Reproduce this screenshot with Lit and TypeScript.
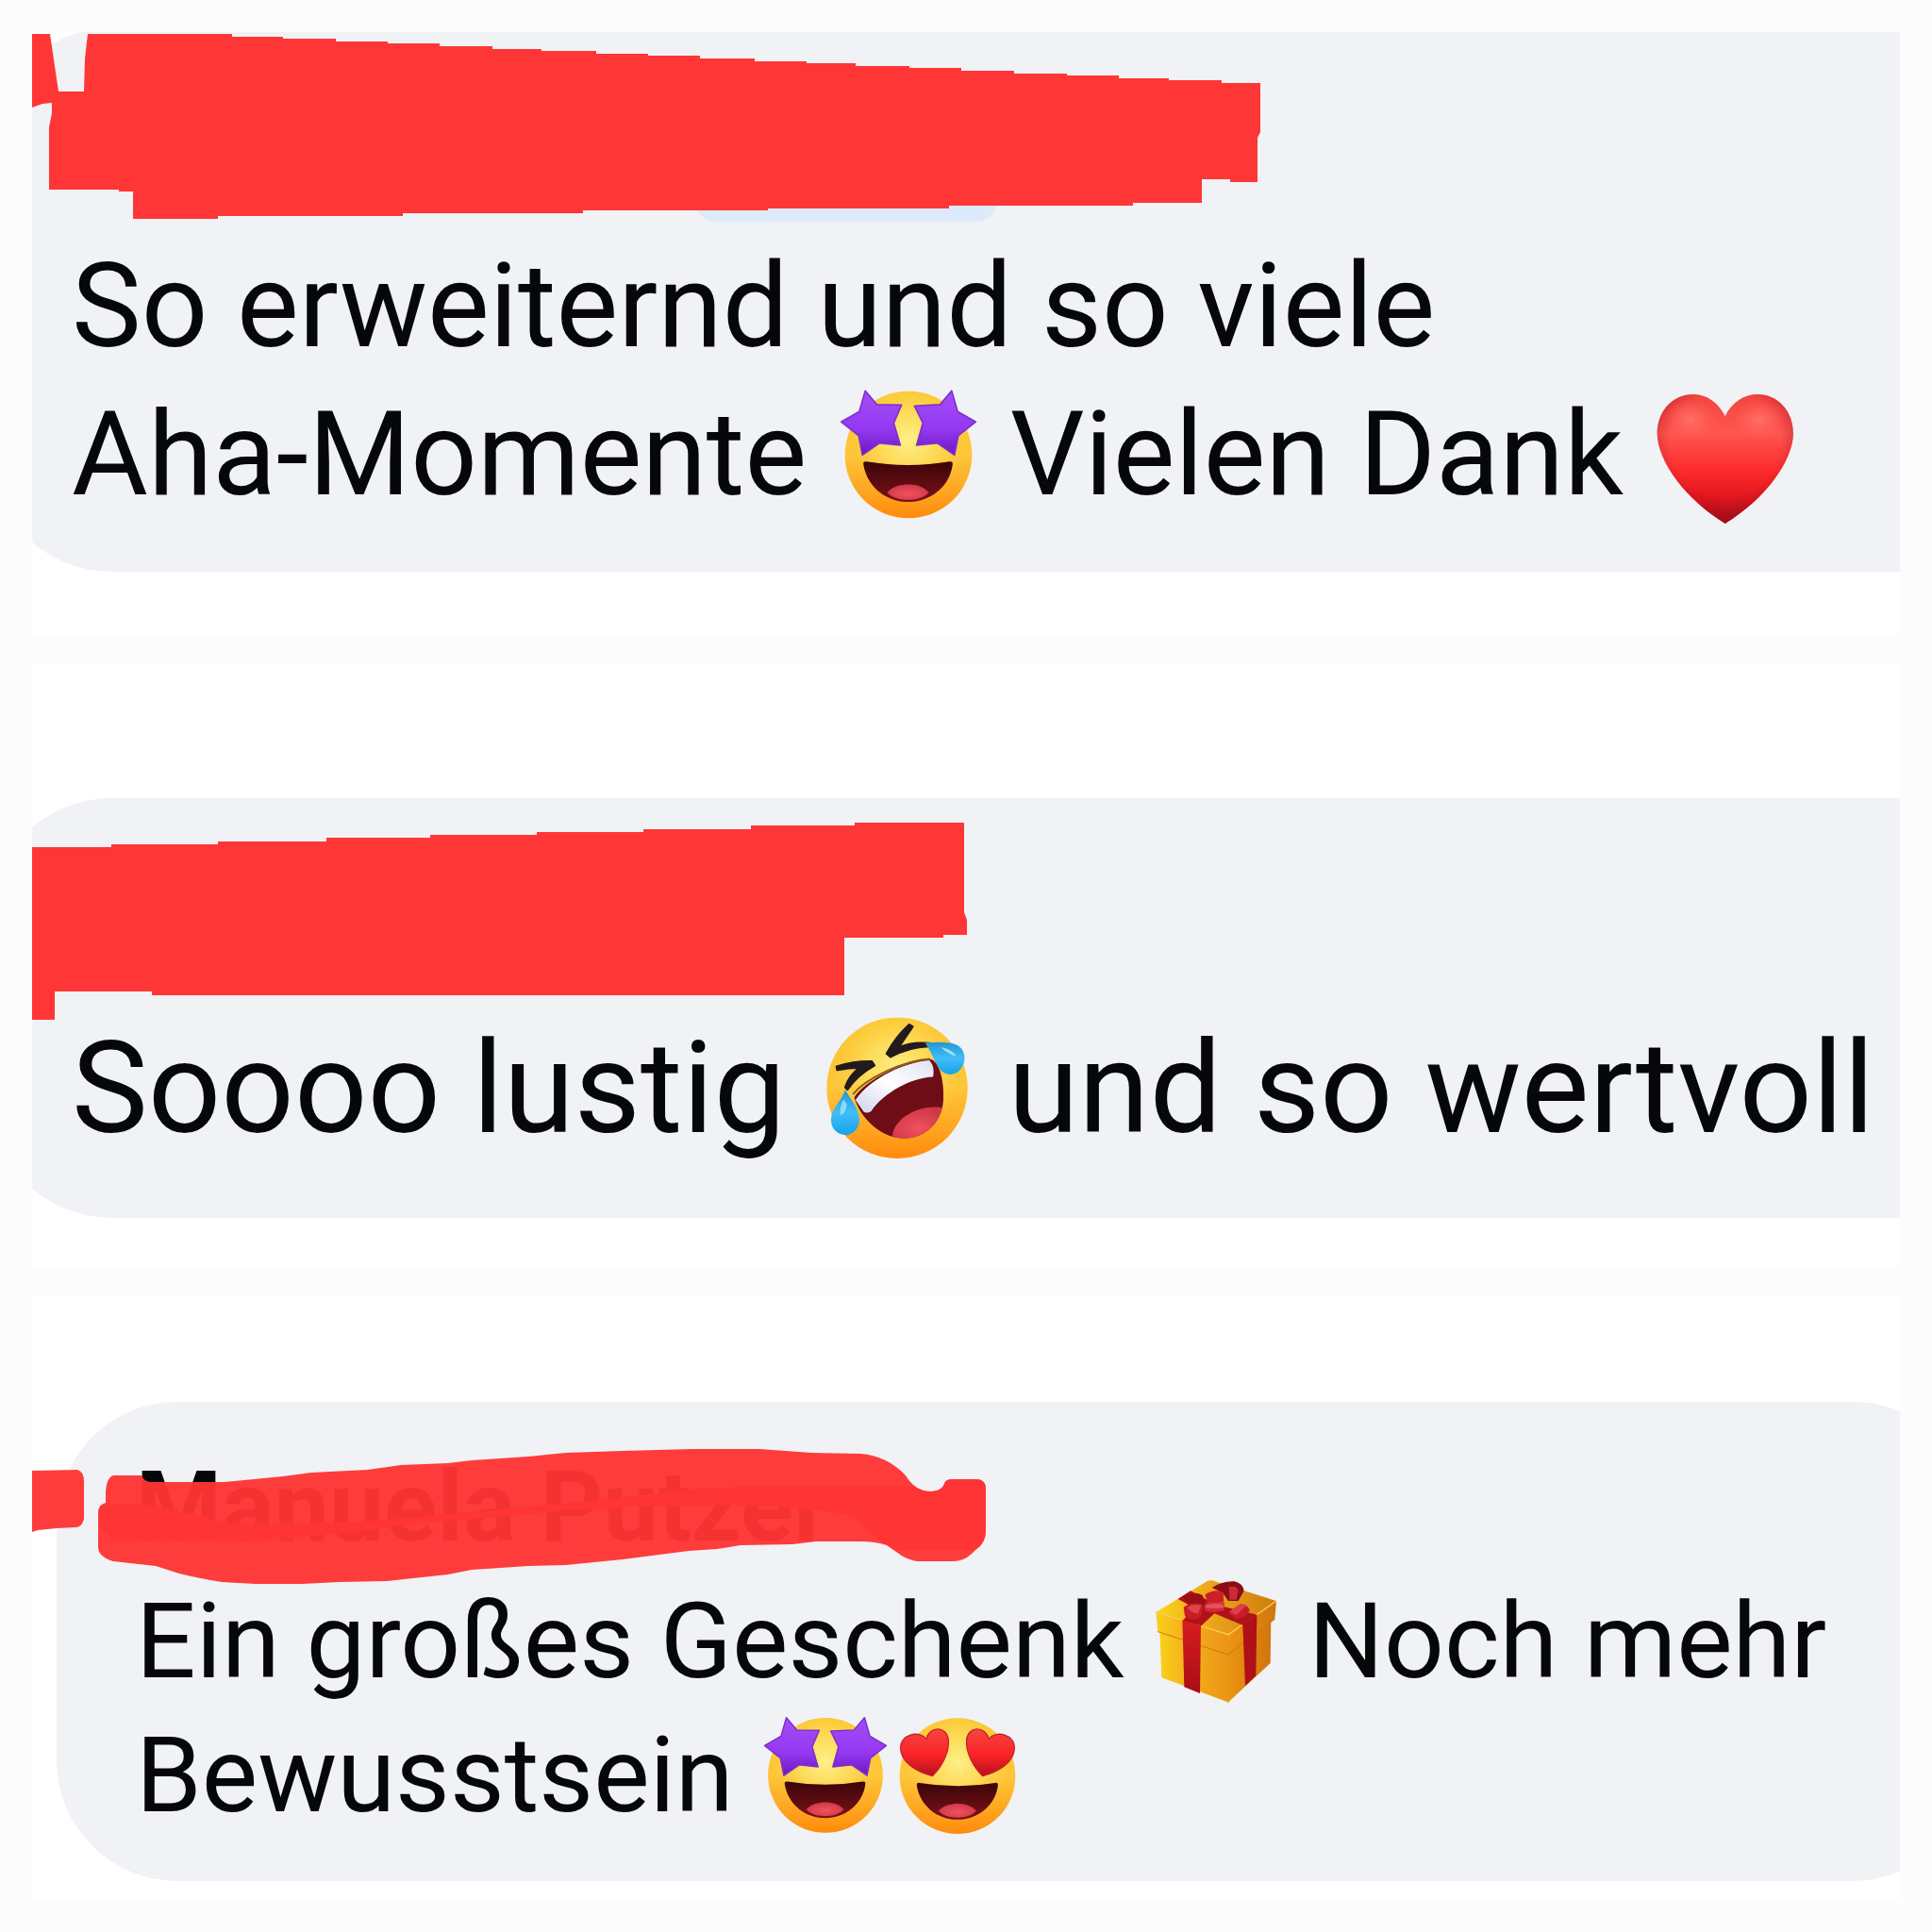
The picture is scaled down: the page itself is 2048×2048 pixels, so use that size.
import { LitElement, html, css, svg, nothing } from "lit";
import { customElement, property } from "lit/decorators.js";

type Glyph = "star-eyes" | "heart" | "rofl" | "gift" | "heart-eyes";

const faceDefs = svg`
  <linearGradient id="face" x1="0" y1="0" x2="0" y2="1">
    <stop offset="0" stop-color="#fbc62f" />
    <stop offset="0.5" stop-color="#fdc63a" />
    <stop offset="0.8" stop-color="#ffa41f" />
    <stop offset="1" stop-color="#ff8a0c" />
  </linearGradient>
  <radialGradient id="glow" cx="0.5" cy="0.38" r="0.45">
    <stop offset="0" stop-color="#fdf08a" />
    <stop offset="0.5" stop-color="#fde264" stop-opacity="0.75" />
    <stop offset="1" stop-color="#fdd44c" stop-opacity="0" />
  </radialGradient>
  <linearGradient id="mouth" x1="0" y1="0" x2="0" y2="1">
    <stop offset="0" stop-color="#3a0508" />
    <stop offset="1" stop-color="#7c1219" />
  </linearGradient>
  <radialGradient id="tongue" cx="0.5" cy="0.6" r="0.6">
    <stop offset="0" stop-color="#f0525e" />
    <stop offset="1" stop-color="#cf3648" />
  </radialGradient>
  <linearGradient id="violet" x1="0" y1="0" x2="0" y2="1">
    <stop offset="0" stop-color="#a44ef6" />
    <stop offset="0.6" stop-color="#9438f2" />
    <stop offset="1" stop-color="#6a18be" />
  </linearGradient>
  <linearGradient id="love" x1="0" y1="0" x2="0" y2="1">
    <stop offset="0" stop-color="#f5453f" />
    <stop offset="0.55" stop-color="#fb2429" />
    <stop offset="1" stop-color="#b3101c" />
  </linearGradient>
`;

const grin = svg`
  <path d="M121 274Q119 263 131 265Q265 287 396 265Q408 263 406 275C397 345 335 394 264 394S132 345 121 274Z" fill="url(#mouth)" />
  <path d="M197 364C214 345 238 338 264 338S314 345 330 364C312 382 288 387 264 387S215 382 197 364Z" fill="url(#tongue)" />
`;

const art: Record<Glyph, { box: string; label: string; body: unknown }> = {
  "star-eyes": {
    box: "45 20 440 440",
    label: "Gesicht mit Sternaugen",
    body: svg`
      <circle cx="265" cy="243" r="203" fill="url(#face)" />
      <circle cx="265" cy="243" r="203" fill="url(#glow)" />
      ${grin}
      <g fill="url(#violet)" stroke="#7f2fd0" stroke-width="5" stroke-linejoin="round">
        <path d="M127 39L164 83L243 84L218 142L239 213L172 206L118 244L106 182L50 138L108 105Z" />
        <path d="M403 39L366 83L284 87L311 142L291 213L358 206L412 244L424 182L480 138L422 105Z" />
      </g>`,
  },
  heart: {
    box: "45 20 440 440",
    label: "Rotes Herz",
    body: svg`
      <defs>
        <linearGradient id="heartbase" x1="0" y1="0" x2="0" y2="1">
          <stop offset="0" stop-color="#f4443f" />
          <stop offset="0.3" stop-color="#ff5650" />
          <stop offset="0.6" stop-color="#fb2a2c" />
          <stop offset="0.8" stop-color="#e2161e" />
          <stop offset="1" stop-color="#a80c18" />
        </linearGradient>
        <radialGradient id="heartedge" cx="0.5" cy="0.38" r="0.62">
          <stop offset="0.65" stop-color="#b31420" stop-opacity="0" />
          <stop offset="1" stop-color="#8e0d18" stop-opacity="0.6" />
        </radialGradient>
        <radialGradient id="heartshine" cx="0.5" cy="0.5" r="0.5">
          <stop offset="0" stop-color="#ff7469" stop-opacity="0.9" />
          <stop offset="1" stop-color="#ff6259" stop-opacity="0" />
        </radialGradient>
      </defs>
      <path d="M264 120C242 74 204 50 161 50C96 50 47 104 47 175C47 250 120 375 264 463C408 375 482 250 482 175C482 104 433 50 368 50C325 50 286 74 264 120Z" fill="url(#heartbase)" />
      <path d="M264 120C242 74 204 50 161 50C96 50 47 104 47 175C47 250 120 375 264 463C408 375 482 250 482 175C482 104 433 50 368 50C325 50 286 74 264 120Z" fill="url(#heartedge)" />
      <ellipse cx="155" cy="130" rx="85" ry="65" fill="url(#heartshine)" />
      <ellipse cx="372" cy="130" rx="85" ry="65" fill="url(#heartshine)" />`,
  },
  rofl: {
    box: "32 3 482 482",
    label: "Vor Lachen am Boden",
    body: svg`
      <defs>
        <linearGradient id="tear" x1="0" y1="0" x2="0" y2="1">
          <stop offset="0" stop-color="#2196d8" />
          <stop offset="0.5" stop-color="#42bdf6" />
          <stop offset="1" stop-color="#16a3ec" />
        </linearGradient>
        <linearGradient id="teeth" x1="0" y1="1" x2="1" y2="0">
          <stop offset="0" stop-color="#cfd3ea" />
          <stop offset="0.5" stop-color="#ffffff" />
          <stop offset="1" stop-color="#dfe2f2" />
        </linearGradient>
        <clipPath id="laugh">
          <path d="M136 278C170 222 300 160 380 156C402 162 421 205 421 276C421 352 368 409 295 409C225 409 158 350 136 278Z" />
        </clipPath>
      </defs>
      <circle cx="273" cy="248" r="225" fill="url(#face)" />
      <circle cx="273" cy="248" r="225" fill="url(#glow)" />
      <g clip-path="url(#laugh)">
        <rect x="120" y="140" width="320" height="280" fill="#6e0d16" />
        <path d="M258 396C268 340 350 296 425 312V420H260Z" fill="url(#tongue)" />
        <path d="M140 286C190 215 300 165 376 160Q394 180 388 212C320 214 230 262 190 322Q176 330 166 324Z" fill="url(#teeth)" />
      </g>
      <path d="M132 268C170 220 290 160 378 155" fill="none" stroke="#8c5a14" stroke-width="6" />
      <g fill="#221a1c" stroke="#221a1c" stroke-linejoin="round" stroke-width="8">
        <path d="M312 46L322 52L276 120Q320 100 376 106L374 114Q310 116 252 148L240 138Q270 84 312 46Z" />
        <path d="M80 180Q140 162 192 164L200 176Q146 206 114 252L108 246Q120 208 156 182Q120 182 82 190Z" />
      </g>
      <path d="M362 103C400 102 440 98 468 113C494 130 494 168 474 190C456 210 428 208 413 192C394 172 384 134 362 103Z" fill="url(#tear)" />
      <path d="M412 118Q446 122 462 146Q440 142 412 118Z" fill="#b9ecfd" opacity="0.8" />
      <path d="M107 254C126 288 152 312 152 350C152 380 130 399 106 398C80 397 61 377 62 346C64 312 96 290 107 254Z" fill="url(#tear)" />
      <path d="M102 284Q88 308 92 336Q112 326 112 300Z" fill="#9fe3fb" opacity="0.8" />`,
  },
  gift: {
    box: "43 36 396 396",
    label: "Geschenk",
    body: svg`
      <defs>
        <linearGradient id="left" x1="0" y1="0" x2="1" y2="0">
          <stop offset="0" stop-color="#f9d01a" />
          <stop offset="0.35" stop-color="#f6b41c" />
          <stop offset="1" stop-color="#ea9415" />
        </linearGradient>
        <linearGradient id="right" x1="0" y1="0" x2="1" y2="0">
          <stop offset="0" stop-color="#ec9412" />
          <stop offset="1" stop-color="#d0760e" />
        </linearGradient>
        <linearGradient id="lid" x1="0" y1="0" x2="1" y2="0">
          <stop offset="0" stop-color="#fbd51c" />
          <stop offset="0.45" stop-color="#eda51a" />
          <stop offset="1" stop-color="#d07c0e" />
        </linearGradient>
        <linearGradient id="ribbon" x1="0" y1="0" x2="0" y2="1">
          <stop offset="0" stop-color="#d81c22" />
          <stop offset="1" stop-color="#a80d14" />
        </linearGradient>
      </defs>
      <path d="M62 195L282 255V431L68 352Z" fill="url(#left)" />
      <path d="M278 255L416 165L414 306L278 432Z" fill="url(#right)" />
      <path d="M50 144L212 46Q225 40 238 46L432 108L281 216Z" fill="url(#lid)" />
      <path d="M50 144L281 214L279 279L56 206Z" fill="url(#left)" />
      <path d="M281 214L433 108L428 166L279 279Z" fill="url(#right)" />
      <path d="M56 206L279 279L428 166" fill="none" stroke="#c87a12" stroke-width="3" />
      <path d="M50 144L281 215L433 108" fill="none" stroke="#fccb4c" stroke-width="4" />
      <path d="M134 168L193 188L190 402L140 382Z" fill="url(#ribbon)" />
      <path d="M326 184L371 152L368 346L334 378Z" fill="#b01018" />
      <path d="M120 102L160 76L240 120L372 152L326 185L236 148L193 188L136 170L170 130Z" fill="#b01219" />
      <path d="M228 66Q262 44 300 46Q326 52 330 76L312 108L280 108L262 82Z" fill="#8e0c17" />
      <path d="M282 64Q308 58 312 76L306 104L284 104Z" fill="#c92a34" />
      <path d="M136 96Q170 74 198 90L210 122L150 116Z" fill="#9a0e17" />
      <path d="M206 88Q238 68 264 80L266 112L214 116Z" fill="#cc1f29" />
      <path d="M138 128Q164 110 196 118Q206 138 186 164Q160 172 142 156Z" fill="#c91c26" />
      <path d="M150 128Q170 116 194 122L184 148Q158 146 150 128Z" fill="#dd444e" />
      <path d="M280 146L318 118Q342 118 348 138Q340 160 306 166Z" fill="#c91c26" />
      <path d="M284 142L318 118L338 124L304 154Z" fill="#dc3f49" />
      <path d="M204 118Q236 106 268 114V138Q236 148 206 140Z" fill="#d42a34" />
      <path d="M208 122Q236 112 266 120V130Q236 134 208 130Z" fill="#e5525c" />`,
  },
  "heart-eyes": {
    box: "452 12 396 396",
    label: "Gesicht mit Herzaugen",
    body: svg`
      <circle cx="650" cy="215" r="184" fill="url(#face)" />
      <circle cx="650" cy="215" r="184" fill="url(#glow)" />
      <g transform="translate(411 -3) scale(0.905)">${grin}</g>
      <g fill="url(#love)" stroke="#cc1f26" stroke-width="4" stroke-linejoin="round">
        <path d="M570 215C522 203 469 172 469 126C469 82 526 68 551 97C560 56 616 54 621 100C625 142 596 190 570 215Z" />
        <path d="M730 215C778 203 831 172 831 126C831 82 774 68 749 97C740 56 684 54 679 100C675 142 704 190 730 215Z" />
      </g>`,
  },
};

@customElement("emoji-glyph")
export class EmojiGlyph extends LitElement {
  @property() name: Glyph = "heart";

  static styles = css`
    :host {
      display: inline-block;
      width: var(--glyph);
      height: var(--glyph);
      margin: 0 4px;
      vertical-align: var(--glyph-drop);
    }
    .glyph {
      display: block;
      width: 100%;
      height: 100%;
      overflow: visible;
    }
  `;

  render() {
    const g = art[this.name];
    return html`<svg class="glyph" viewBox=${g.box} role="img" aria-label=${g.label}>
      <defs>${faceDefs}</defs>
      ${g.body}
    </svg>`;
  }
}

/* Stair-stepped edge of a blocky marker stroke: x positions of the steps, start and end height. */
function stairs(xs: number[], from: number, to: number): string {
  let y = from;
  return xs
    .map((x, i) => {
      const before = y;
      y = Math.round(from + ((to - from) * (i + 1)) / xs.length);
      return `L${x} ${before}L${x} ${y}`;
    })
    .join("");
}

const edgeOne = stairs(
  [246, 300, 356, 411, 466, 522, 574, 632, 687, 742, 800, 855, 907, 964, 1019, 1075, 1131, 1186, 1239, 1295],
  36,
  88,
);
const edgeTwo = stairs([118, 231, 346, 456, 569, 682, 796, 906], 898, 872);

const markerOne = svg`
  <rect x="736" y="170" width="322" height="65" rx="24" fill="#dcebfb" />
  <path fill="#ff3636" d="M34 36H53L62 97H89L90 62L93 36${edgeOne}H1336V140L1333 146V193H1304V190H1274V215H1201V218H1006V221H814V223H618V226H427V229H231V232H141V203H126V201H52V135L55 120V109L45 110L34 114Z" />
`;

const markerTwo = svg`
  <path fill="#ff3636" d="M34 898${edgeTwo}H1022V967L1025 975V991H1000V994H895V1055H161V1051H58V1081H34Z" />
`;

const markerThree = svg`
  <g fill="#ff3434" fill-opacity="0.96">
    <path d="M34 1559L82 1558Q89 1560 89 1570V1610Q87 1619 80 1619L60 1620L40 1622L34 1624Z" />
    <path d="M120 1564H150Q153 1571 160 1571H238L300 1565L330 1561L390 1558L425 1553L475 1551L500 1548L560 1544L600 1540L660 1538L734 1536H805L860 1540L912 1541Q940 1543 960 1564Q970 1581 987 1581Q999 1580 1001 1573Q1002 1568 1010 1568H1036Q1045 1569 1045 1578V1622Q1045 1636 1034 1643Q1024 1655 1010 1655H972Q960 1653 950 1645L940 1638Q928 1634 912 1634H865L840 1637L785 1638L760 1642L730 1644L660 1653L600 1659L560 1660L500 1664L475 1669L410 1676L360 1677L320 1679H270L235 1677Q210 1673 190 1668L165 1660L120 1655Q104 1650 104 1640V1602Q105 1595 112 1593V1582Q113 1566 120 1564Z" />
    <path d="M106 1596L150 1594L190 1602L240 1614L300 1616L400 1612L500 1603L560 1597L640 1590L720 1580L800 1575H968Q976 1581 987 1581Q999 1580 1001 1573Q1002 1568 1010 1568H1036Q1045 1569 1045 1578V1622Q1045 1636 1034 1643H948Q920 1625 905 1608Q880 1600 800 1596Q700 1594 600 1601L540 1607L440 1615L370 1625L270 1633L120 1632L106 1620Z" />
  </g>
`;

@customElement("app-root")
export class AppRoot extends LitElement {
  static styles = css`
    :host {
      display: block;
      font-family: Roboto, "Liberation Sans", sans-serif;
      color: #050708;
    }
    .board {
      box-sizing: border-box;
      min-height: 100vh;
      padding: 34px;
      display: grid;
      grid-template-columns: minmax(0, 1fr);
      grid-auto-rows: 1fr;
      gap: 32px;
      background: #fcfcfc;
    }
    .panel {
      overflow: hidden;
      background: #fff;
    }
    .bubble {
      display: flex;
      flex-direction: column;
      background: #f0f2f5;
      border-radius: 128px 0 0 128px;
      white-space: nowrap;
      margin: 0 -78px 0 -44px;
      padding: 0 86px 46px;
    }
    .first {
      margin-top: -4px;
      font-size: 124px;
      line-height: 157px;
      --glyph: 146px;
      --glyph-drop: -30px;
    }
    .second {
      margin-top: 141px;
      padding-bottom: 52px;
      font-size: 136px;
      line-height: 170px;
      --glyph: 160px;
      --glyph-drop: -32px;
    }
    .third {
      margin: 111px -78px 0 26px;
      padding: 41px 84px;
      border-radius: 128px;
      font-size: 112px;
      line-height: 142px;
      --glyph: 132px;
      --glyph-drop: -27px;
    }
    .name {
      position: relative;
      height: 216px;
      margin: 0;
      font-size: 104px;
      font-weight: 700;
    }
    .second .name {
      height: 223px;
    }
    .third .name {
      height: 142px;
    }
    .marker {
      position: absolute;
      top: 0;
      left: -42px;
      width: 1310px;
      height: 216px;
      overflow: visible;
    }
    .third .marker {
      left: -110px;
    }
    .text {
      margin: 0;
    }
    .line {
      display: block;
    }
  `;

  private message(kind: string, name: string | typeof nothing, box: string, marker: unknown, lines: unknown[]) {
    return html`<article class="panel">
      <div class="bubble ${kind}">
        <h2 class="name">
          ${name}<svg class="marker" viewBox=${box} aria-hidden="true">${marker}</svg>
        </h2>
        <p class="text">${lines.map((l) => html`<span class="line">${l}</span>`)}</p>
      </div>
    </article>`;
  }

  render() {
    return html`<main class="board">
      ${this.message("first", nothing, "34 30 1310 216", markerOne, [
        "So erweiternd und so viele",
        html`Aha-Momente <emoji-glyph name="star-eyes"></emoji-glyph> Vielen Dank <emoji-glyph name="heart"></emoji-glyph>`,
      ])}
      ${this.message("second", nothing, "34 846 1310 216", markerTwo, [
        html`Soooo lustig <emoji-glyph name="rofl"></emoji-glyph> und so wertvoll`,
      ])}
      ${this.message("third", "Manuela Putzer", "34 1527 1310 216", markerThree, [
        html`Ein großes Geschenk <emoji-glyph name="gift"></emoji-glyph> Noch mehr`,
        html`Bewusstsein <emoji-glyph name="star-eyes"></emoji-glyph><emoji-glyph name="heart-eyes"></emoji-glyph>`,
      ])}
    </main>`;
  }
}
